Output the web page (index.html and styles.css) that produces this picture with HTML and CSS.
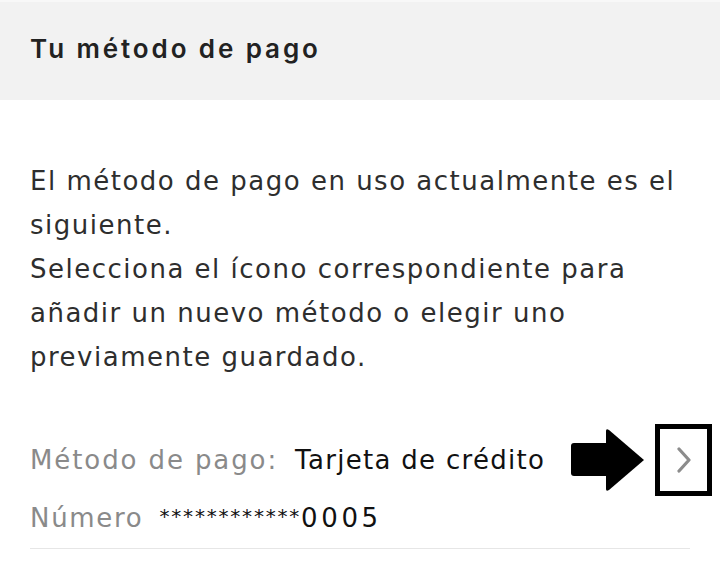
FILE: index.html
```html
<!DOCTYPE html>
<html lang="es">
<head>
<meta charset="utf-8">
<link rel="stylesheet" href="styles.css">
</head>
<body>
<div class="page">
  <header class="head">
    <h1 class="title">Tu método de pago</h1>
  </header>
  <main class="content">
    <p class="intro">El método de pago en uso actualmente es el siguiente.<br>Selecciona el ícono correspondiente para añadir un nuevo método o elegir uno previamente guardado.</p>
    <div class="row row-method">
      <span class="label">Método de pago:</span>
      <span class="value">Tarjeta de crédito</span>
      <svg class="arrow" width="74" height="64" viewBox="0 0 74 64">
        <rect x="0" y="15" width="39" height="33" rx="3" fill="#000"/>
        <path d="M35 3 Q35 0 38 2 L73 32 L38 62 Q35 64 35 61 Z" fill="#000"/>
      </svg>
      <div class="callout">
        <svg class="chev" width="14" height="26" viewBox="0 0 14 26">
          <path d="M2 2 L12 13 L2 24" fill="none" stroke="#8c8c8c" stroke-width="3.2" stroke-linecap="round" stroke-linejoin="round"/>
        </svg>
      </div>
    </div>
    <div class="row row-number">
      <span class="label label-num">Número</span>
      <span class="value value-num"><span class="stars">************</span><span class="digits">0005</span></span>
    </div>
  </main>
</div>
</body>
</html>
```
FILE: styles.css
```css
* { box-sizing: border-box; }
html, body { margin: 0; padding: 0; background: #fff; }
body { font-family: "DejaVu Sans", Inter, sans-serif; }
.page { width: 720px; height: 563px; overflow: hidden; }
.head {
  height: 100px;
  background: #f2f2f2;
  border-top: 2px solid #f8f8f8;
  display: flex;
  align-items: center;
  padding: 0 30px 6px;
}
.title {
  margin: 0;
  font-family: Inter, sans-serif;
  font-size: 26px;
  font-weight: 600;
  color: #222;
  letter-spacing: 2.9px;
}
.content { padding: 59px 30px 0; }
.intro {
  margin: 0 0 45px;
  font-size: 26px;
  line-height: 44px;
  color: #2e2e2e;
  letter-spacing: 1.5px;
}
.row {
  display: flex;
  align-items: center;
  font-size: 26px;
  letter-spacing: 1.9px;
}
.row-method { height: 72px; }
.row-number {
  height: 53px;
  padding-bottom: 9px;
  border-bottom: 1px solid #e6e6e6;
}
.label { color: #8a8a8a; }
.label-num { letter-spacing: 1.7px; }
.value { color: #111; margin-left: 17px; letter-spacing: 1.3px; }
.value-num { margin-left: 16px; }
.stars { font-size: 20px; letter-spacing: 1.8px; vertical-align: 4px; }
.digits { letter-spacing: 3.6px; }
.arrow { margin-left: auto; display: block; }
.callout {
  width: 57px;
  height: 72px;
  margin-left: 10px;
  margin-right: -22px;
  border: 5px solid #000;
  display: flex;
  align-items: center;
  justify-content: center;
}
.chev { display: block; }
```
